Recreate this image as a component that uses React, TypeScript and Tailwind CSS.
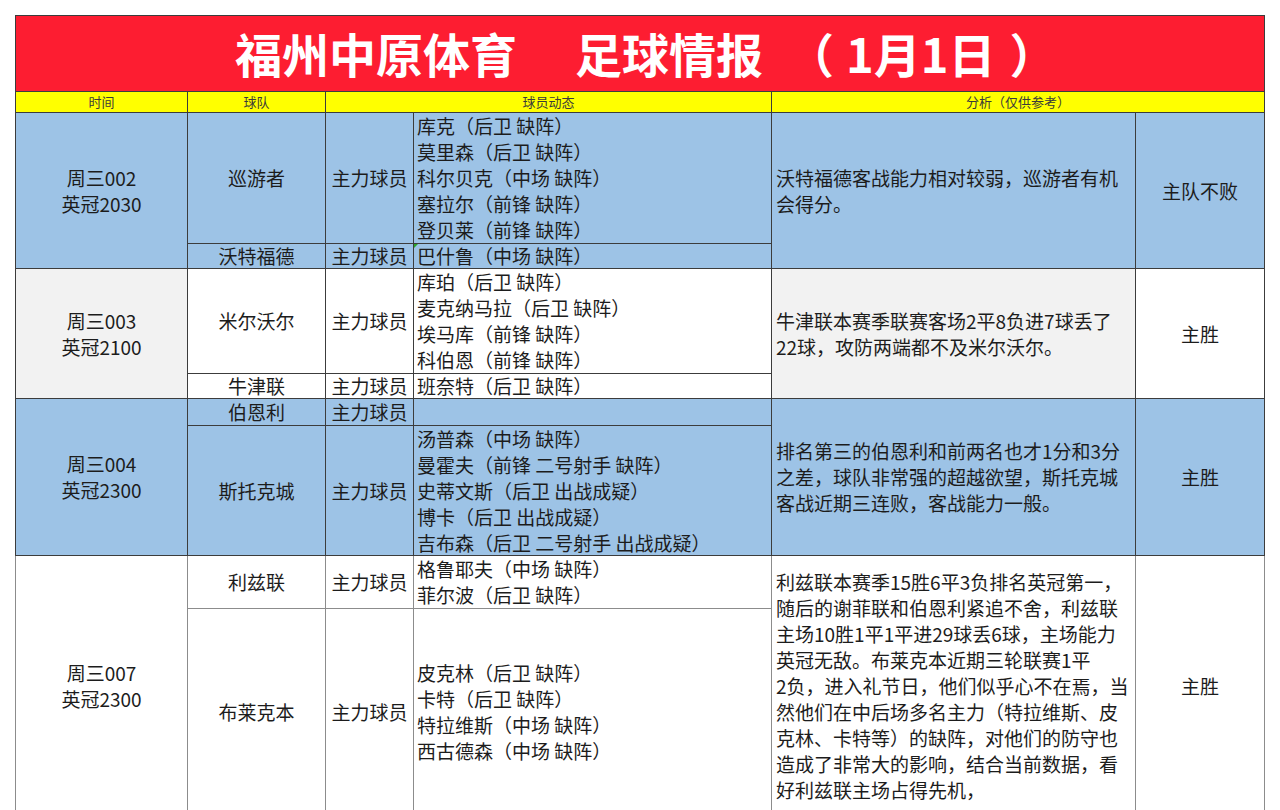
import React from "react";

const BLUE = "bg-[#9dc3e6]";
const GRAY = "bg-[#f2f2f2]";
const WHITE = "bg-white";

function Lines({ lines }: { lines: string[] }) {
  return (
    <div className="flex flex-col">
      {lines.map((l, i) => (
        <span key={i} className="whitespace-nowrap">
          {l}
        </span>
      ))}
    </div>
  );
}

export default function App() {
  const center =
    "flex items-center justify-center text-center text-[19px] leading-[26px] text-[#1c1c1c]";
  const left =
    "flex items-center justify-start pl-[3px] text-[19px] leading-[26px] text-[#1c1c1c]";
  const analysis =
    "flex items-center justify-start pl-[4px] text-[19px] leading-[26px] text-[#1c1c1c]";
  const head =
    "flex items-center justify-center bg-[#ffff00] text-[13px] leading-[20px] text-[#3a3a3a]";

  return (
    <div className="w-[1280px] h-[810px] overflow-hidden bg-white pt-[15px] pl-[15px] font-['Noto_Sans_CJK_SC','Noto_Sans',sans-serif]">
      <div className="relative grid w-fit gap-px p-px grid-cols-[171px_137px_87px_357px_363px_128px] grid-rows-[75px_20px_130px_24px_104px_24px_26px_129px_52px_206px] bg-[linear-gradient(to_bottom,#3c3c3c_541px,#8c8c8c_541px)]">
        {/* Title */}
        <div className="col-start-1 col-span-6 row-start-1 flex items-center bg-[#fd1d31] pl-[219px] pb-[2px] text-[47px] font-bold leading-none text-white">
          <span>福州中原体育</span>
          <span className="ml-[58px]">足球情报</span>
          <span className="ml-[24px]">（</span>
          <span className="ml-[12px]">1月1日</span>
          <span className="ml-[14px]">）</span>
        </div>

        {/* Header */}
        <div className={`${head} col-start-1 row-start-2`}>时间</div>
        <div className={`${head} col-start-2 row-start-2`}>球队</div>
        <div className={`${head} col-start-3 col-span-2 row-start-2`}>球员动态</div>
        <div className={`${head} col-start-5 col-span-2 row-start-2`}>分析（仅供参考）</div>

        {/* Match 1 */}
        <div className={`${center} ${BLUE} col-start-1 row-start-3 row-span-2`}>
          <Lines lines={["周三002", "英冠2030"]} />
        </div>
        <div className={`${center} ${BLUE} col-start-2 row-start-3`}>巡游者</div>
        <div className={`${center} ${BLUE} col-start-3 row-start-3`}>主力球员</div>
        <div className={`${left} ${BLUE} col-start-4 row-start-3`}>
          <Lines
            lines={[
              "库克（后卫 缺阵）",
              "莫里森（后卫 缺阵）",
              "科尔贝克（中场 缺阵）",
              "塞拉尔（前锋 缺阵）",
              "登贝莱（前锋 缺阵）",
            ]}
          />
        </div>
        <div className={`${center} ${BLUE} col-start-2 row-start-4`}>沃特福德</div>
        <div className={`${center} ${BLUE} col-start-3 row-start-4`}>主力球员</div>
        <div className={`${left} ${BLUE} col-start-4 row-start-4 relative`}>
          <span className="absolute left-0 top-0 h-0 w-0 border-t-[4px] border-r-[4px] border-t-[#2aa52a] border-r-transparent" />
          <Lines lines={["巴什鲁（中场 缺阵）"]} />
        </div>
        <div className={`${analysis} ${BLUE} col-start-5 row-start-3 row-span-2`}>
          <Lines lines={["沃特福德客战能力相对较弱，巡游者有机", "会得分。"]} />
        </div>
        <div className={`${center} ${BLUE} col-start-6 row-start-3 row-span-2`}>主队不败</div>

        {/* Match 2 */}
        <div className={`${center} ${GRAY} col-start-1 row-start-5 row-span-2`}>
          <Lines lines={["周三003", "英冠2100"]} />
        </div>
        <div className={`${center} ${WHITE} col-start-2 row-start-5`}>米尔沃尔</div>
        <div className={`${center} ${WHITE} col-start-3 row-start-5`}>主力球员</div>
        <div className={`${left} ${WHITE} col-start-4 row-start-5`}>
          <Lines
            lines={[
              "库珀（后卫 缺阵）",
              "麦克纳马拉（后卫 缺阵）",
              "埃马库（前锋 缺阵）",
              "科伯恩（前锋 缺阵）",
            ]}
          />
        </div>
        <div className={`${center} ${WHITE} col-start-2 row-start-6`}>牛津联</div>
        <div className={`${center} ${WHITE} col-start-3 row-start-6`}>主力球员</div>
        <div className={`${left} ${WHITE} col-start-4 row-start-6`}>
          <Lines lines={["班奈特（后卫 缺阵）"]} />
        </div>
        <div className={`${analysis} ${GRAY} col-start-5 row-start-5 row-span-2`}>
          <Lines lines={["牛津联本赛季联赛客场2平8负进7球丢了", "22球，攻防两端都不及米尔沃尔。"]} />
        </div>
        <div className={`${center} ${WHITE} col-start-6 row-start-5 row-span-2`}>主胜</div>

        {/* Match 3 */}
        <div className={`${center} ${BLUE} col-start-1 row-start-7 row-span-2`}>
          <Lines lines={["周三004", "英冠2300"]} />
        </div>
        <div className={`${center} ${BLUE} col-start-2 row-start-7`}>伯恩利</div>
        <div className={`${center} ${BLUE} col-start-3 row-start-7`}>主力球员</div>
        <div className={`${left} ${BLUE} col-start-4 row-start-7`} />
        <div className={`${center} ${BLUE} col-start-2 row-start-8`}>斯托克城</div>
        <div className={`${center} ${BLUE} col-start-3 row-start-8`}>主力球员</div>
        <div className={`${left} ${BLUE} col-start-4 row-start-8`}>
          <Lines
            lines={[
              "汤普森（中场 缺阵）",
              "曼霍夫（前锋 二号射手 缺阵）",
              "史蒂文斯（后卫 出战成疑）",
              "博卡（后卫 出战成疑）",
              "吉布森（后卫 二号射手 出战成疑）",
            ]}
          />
        </div>
        <div className={`${analysis} ${BLUE} col-start-5 row-start-7 row-span-2`}>
          <Lines
            lines={[
              "排名第三的伯恩利和前两名也才1分和3分",
              "之差，球队非常强的超越欲望，斯托克城",
              "客战近期三连败，客战能力一般。",
            ]}
          />
        </div>
        <div className={`${center} ${BLUE} col-start-6 row-start-7 row-span-2`}>主胜</div>

        {/* Match 4 */}
        <div className={`${center} ${WHITE} col-start-1 row-start-9 row-span-2`}>
          <Lines lines={["周三007", "英冠2300"]} />
        </div>
        <div className={`${center} ${WHITE} col-start-2 row-start-9`}>利兹联</div>
        <div className={`${center} ${WHITE} col-start-3 row-start-9`}>主力球员</div>
        <div className={`${left} ${WHITE} col-start-4 row-start-9`}>
          <Lines lines={["格鲁耶夫（中场 缺阵）", "菲尔波（后卫 缺阵）"]} />
        </div>
        <div className={`${center} ${WHITE} col-start-2 row-start-10`}>布莱克本</div>
        <div className={`${center} ${WHITE} col-start-3 row-start-10`}>主力球员</div>
        <div className={`${left} ${WHITE} col-start-4 row-start-10`}>
          <Lines
            lines={[
              "皮克林（后卫 缺阵）",
              "卡特（后卫 缺阵）",
              "特拉维斯（中场 缺阵）",
              "西古德森（中场 缺阵）",
            ]}
          />
        </div>
        <div className={`${analysis} ${WHITE} col-start-5 row-start-9 row-span-2`}>
          <Lines
            lines={[
              "利兹联本赛季15胜6平3负排名英冠第一，",
              "随后的谢菲联和伯恩利紧追不舍，利兹联",
              "主场10胜1平1平进29球丢6球，主场能力",
              "英冠无敌。布莱克本近期三轮联赛1平",
              "2负，进入礼节日，他们似乎心不在焉，当",
              "然他们在中后场多名主力（特拉维斯、皮",
              "克林、卡特等）的缺阵，对他们的防守也",
              "造成了非常大的影响，结合当前数据，看",
              "好利兹联主场占得先机，",
            ]}
          />
        </div>
        <div className={`${center} ${WHITE} col-start-6 row-start-9 row-span-2`}>主胜</div>
      </div>
    </div>
  );
}
